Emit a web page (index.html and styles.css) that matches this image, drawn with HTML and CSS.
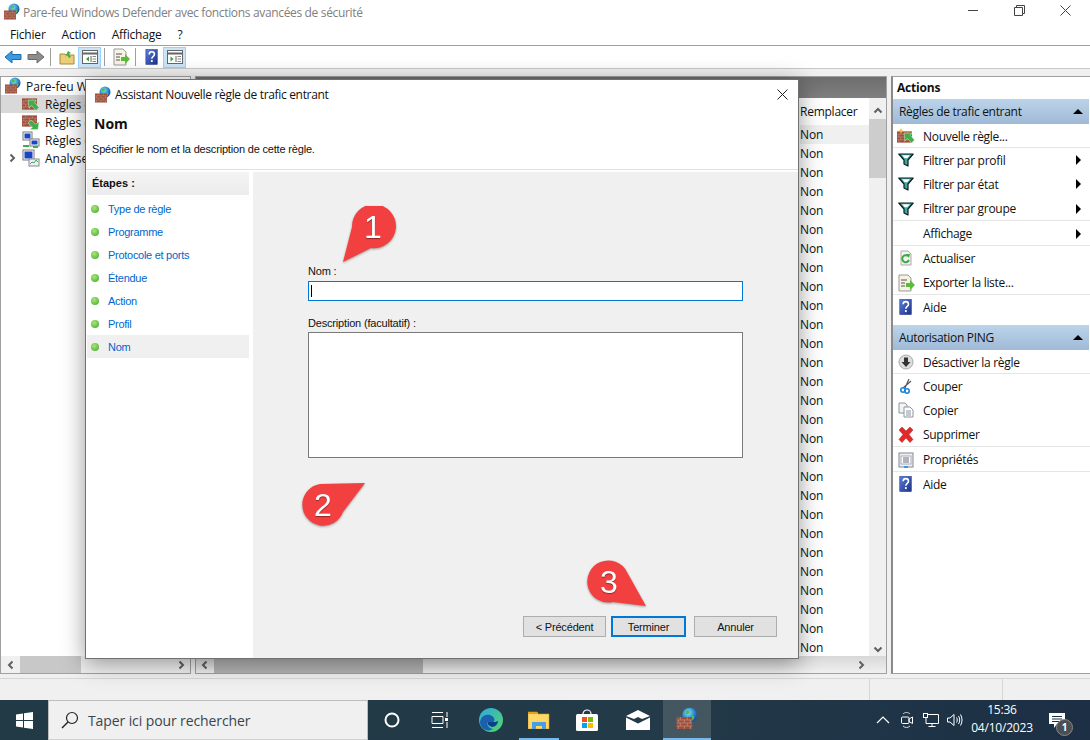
FILE: index.html
```html
<!DOCTYPE html>
<html lang="fr">
<head>
  <meta charset="UTF-8">
  <title>Pare-feu Windows Defender</title>
  <link rel="stylesheet" href="styles.css">
</head>
<body>
  <svg class="defs" width="0" height="0">
    <defs>
      <radialGradient id="globe" cx="40%" cy="35%" r="70%">
        <stop offset="0" stop-color="#8fe0f0"/><stop offset=".55" stop-color="#2f8fd0"/><stop offset="1" stop-color="#173f9a"/>
      </radialGradient>
      <linearGradient id="helpblue" x1="0" y1="0" x2="1" y2="1">
        <stop offset="0" stop-color="#5a7fd8"/><stop offset="1" stop-color="#1c2f8a"/>
      </linearGradient>
      <linearGradient id="edge1" x1="0" y1="0" x2="1" y2="1">
        <stop offset="0" stop-color="#2fa8e0"/><stop offset="1" stop-color="#52d86a"/>
      </linearGradient>
      <symbol id="bricks" viewBox="0 0 16 12">
        <rect width="16" height="12" fill="#9c4f3c"/>
        <path d="M0 3h16M0 6h16M0 9h16M4 0v3M11 0v3M2 3v3M8 3v3M14 3v3M4 6v3M11 6v3M2 9v3M8 9v3M14 9v3" stroke="#c99a88" stroke-width=".6"/>
      </symbol>
      <symbol id="fw" viewBox="0 0 18 18">
        <circle cx="11" cy="6" r="5.5" fill="url(#globe)"/>
        <path d="M8 3c2-1 3 0 3 1s-2 2-3 1zM12 7c2-1 3 0 2 2s-3 1-2-2z" fill="#4cc04c"/>
        <use href="#bricks" x="1" y="7" width="12" height="10"/>
      </symbol>
      <symbol id="rule-in" viewBox="0 0 18 16">
        <use href="#bricks" x="0" y="2" width="15" height="12"/>
        <path d="M6 4l8 0-1.500 2.500 4.500 5-3 3-4.500-5L7 12z" fill="#3eae4a" stroke="#dff0d8" stroke-width=".5"/>
      </symbol>
      <symbol id="rule-new" viewBox="0 0 18 16">
        <use href="#bricks" x="0" y="3" width="15" height="12"/>
        <path d="M7 5l8 0-1.500 2.500 4 4.500-3 3-4-4.500L8 13z" fill="#3eae4a" stroke="#dff0d8" stroke-width=".5"/>
        <path d="M4 0l.8 2.200L7 3l-2.200.8L4 6l-.8-2.200L1 3l2.200-.8z" fill="#f5b428"/>
      </symbol>
      <symbol id="rule-out" viewBox="0 0 18 16">
        <use href="#bricks" x="0" y="1" width="15" height="12"/>
        <path d="M17 8l-1 7.500-8 0 2.500-2.500-4.500-4 3-3 4.500 4z" fill="#3eae4a" stroke="#dff0d8" stroke-width=".5"/>
      </symbol>
      <symbol id="pcs" viewBox="0 0 18 18">
        <rect x="1" y="1" width="9" height="8" fill="#fff" stroke="#777"/><rect x="2.5" y="2.5" width="6" height="5" fill="#1b46c2"/>
        <rect x="8" y="8" width="9" height="7" fill="#fff" stroke="#777"/><rect x="9.5" y="9.5" width="6" height="4" fill="#1b46c2"/>
        <path d="M1 15h6M11 16h5" stroke="#3eae4a" stroke-width="2"/>
      </symbol>
      <symbol id="monitor" viewBox="0 0 18 18">
        <rect x="1" y="1" width="11" height="10" fill="#fff" stroke="#777"/><rect x="2.5" y="2.5" width="8" height="7" fill="#1b46c2"/>
        <rect x="7" y="10" width="10" height="7" fill="#eef" stroke="#888"/><path d="M8 15l2-2 2 1 2-3 2 2" fill="none" stroke="#3eae4a"/>
      </symbol>
      <symbol id="help" viewBox="0 0 16 18">
        <rect x="1" y="0.5" width="13" height="17" fill="url(#helpblue)" stroke="#1c2f8a" stroke-width=".6"/>
        <path d="M4.8 6c0-4 6-4 6 0 0 2.400-3 2.400-3 5" fill="none" stroke="#fff" stroke-width="1.800"/>
        <rect x="6.800" y="12.500" width="2" height="2.200" fill="#fff"/>
      </symbol>
      <symbol id="funnel" viewBox="0 0 16 14">
        <path d="M.8 1h14.400l-5.200 6v6l-4-2V7z" fill="#3fa89c" stroke="#0c1c20" stroke-width="1.200" stroke-linejoin="round"/>
        <path d="M4 2.200h8l-2.800 3h-2.400z" fill="#fff"/>
      </symbol>
      <symbol id="export" viewBox="0 0 18 18">
        <path d="M2 1h9l3 3v13H2z" fill="#f7f3e3" stroke="#999"/>
        <path d="M4 6h6M4 9h4M4 12h4" stroke="#555"/>
        <path d="M9 9h4V6l5 5-5 5v-3H9z" fill="#5cbb3a"/>
      </symbol>
      <symbol id="chev-l" viewBox="0 0 10 10"><path d="M6.500 1.500L3 5l3.500 3.500" fill="none" stroke="#606060" stroke-width="2"/></symbol>
      <symbol id="chev-r" viewBox="0 0 10 10"><path d="M3.500 1.500L7 5 3.500 8.500" fill="none" stroke="#606060" stroke-width="2"/></symbol>
      <symbol id="chev-u" viewBox="0 0 10 10"><path d="M1.500 6.500L5 3l3.500 3.500" fill="none" stroke="#606060" stroke-width="2"/></symbol>
      <symbol id="chev-d" viewBox="0 0 10 10"><path d="M1.500 3.500L5 7l3.500-3.500" fill="none" stroke="#606060" stroke-width="2"/></symbol>
    </defs>
  </svg>

  <div class="window">
    <div class="titlebar">
      <svg class="ic18"><use href="#fw"/></svg>
      <span class="title-text">Pare-feu Windows Defender avec fonctions avancées de sécurité</span>
      <div class="win-ctrls">
        <svg width="11" height="11" viewBox="0 0 11 11"><path d="M0 5.500h10" stroke="#444"/></svg>
        <svg width="11" height="11" viewBox="0 0 11 11"><path d="M.5 2.500h8v8h-8zM2.500 2.500v-2h8v8h-2" fill="none" stroke="#444"/></svg>
        <svg width="11" height="11" viewBox="0 0 11 11"><path d="M.5.500l10 10M10.500.500l-10 10" stroke="#444"/></svg>
      </div>
    </div>

    <div class="menubar">
      <span>Fichier</span><span>Action</span><span>Affichage</span><span>?</span>
    </div>

    <div class="toolbar">
      <span class="tool"><svg width="18" height="14" viewBox="0 0 18 14"><path d="M1 7l7-6v3.500h9v5H8V13z" fill="#3a9be0" stroke="#1c6cb0"/></svg></span>
      <span class="tool"><svg width="18" height="14" viewBox="0 0 18 14"><path d="M17 7l-7-6v3.500H1v5h9V13z" fill="#8d8d8d" stroke="#6a6a6a"/></svg></span>
      <i class="tool-sep"></i>
      <span class="tool"><svg width="16" height="16" viewBox="0 0 16 16"><path d="M1 5h5l1 1h8v9H1z" fill="#e9cf7a" stroke="#a98a30"/><path d="M6 8l3-6 3 2-2 1 2 3-2 1-2-3z" fill="#4cab3c"/></svg></span>
      <span class="tool tool-on"><svg width="16" height="14" viewBox="0 0 16 14"><rect x=".5" y=".5" width="15" height="13" fill="#fff" stroke="#666"/><path d="M.5 3.500h15" stroke="#666" stroke-width="2"/><path d="M9 6v6" stroke="#666"/><path d="M7 6.500L4 9l3 2.500z" fill="#3a9c3a"/><path d="M10.500 6.500h3.500M10.500 9h3.500M10.500 11.500h3.500" stroke="#888"/></svg></span>
      <i class="tool-sep"></i>
      <span class="tool"><svg class="ic18"><use href="#export"/></svg></span>
      <i class="tool-sep"></i>
      <span class="tool"><svg width="14" height="18"><use href="#help"/></svg></span>
      <span class="tool tool-on"><svg width="16" height="14" viewBox="0 0 16 14"><rect x=".5" y=".5" width="15" height="13" fill="#fff" stroke="#666"/><path d="M.5 3.500h15" stroke="#666" stroke-width="2"/><path d="M9 6v6" stroke="#666"/><path d="M3.500 6.500L6.500 9l-3 2.500z" fill="#3a9c3a"/><path d="M10.500 6.500h3.500M10.500 9h3.500M10.500 11.500h3.500" stroke="#888"/></svg></span>
    </div>

    <div class="panes">
      <section class="pane tree-pane">
        <div class="tree">
          <div class="tree-row tree-root"><svg class="ic18"><use href="#fw"/></svg>Pare-feu Windows Defender</div>
          <div class="tree-row tree-sel"><svg class="ic18"><use href="#rule-in"/></svg>Règles de trafic entrant</div>
          <div class="tree-row"><svg class="ic18"><use href="#rule-out"/></svg>Règles de trafic sortant</div>
          <div class="tree-row"><svg class="ic18"><use href="#pcs"/></svg>Règles de sécurité de connexion</div>
          <div class="tree-row tree-more"><svg class="more" width="10" height="10"><use href="#chev-r"/></svg><svg class="ic18"><use href="#monitor"/></svg>Analyse</div>
        </div>
        <div class="hbar">
          <svg width="10" height="10"><use href="#chev-l"/></svg>
          <div class="hbar-track"><div class="hbar-thumb hbar-thumb-left"></div></div>
          <svg width="10" height="10"><use href="#chev-r"/></svg>
        </div>
      </section>

      <section class="pane list-pane">
        <div class="pane-head"></div>
        <div class="list-main">
          <div class="list-col">
            <div class="col-head">Remplacer</div>
            <div class="cell cell-sel">Non</div>
            <div class="cell">Non</div><div class="cell">Non</div><div class="cell">Non</div>
            <div class="cell">Non</div><div class="cell">Non</div><div class="cell">Non</div>
            <div class="cell">Non</div><div class="cell">Non</div><div class="cell">Non</div>
            <div class="cell">Non</div><div class="cell">Non</div><div class="cell">Non</div>
            <div class="cell">Non</div><div class="cell">Non</div><div class="cell">Non</div>
            <div class="cell">Non</div><div class="cell">Non</div><div class="cell">Non</div>
            <div class="cell">Non</div><div class="cell">Non</div><div class="cell">Non</div>
            <div class="cell">Non</div><div class="cell">Non</div><div class="cell">Non</div>
            <div class="cell">Non</div><div class="cell">Non</div><div class="cell">Non</div>
          </div>
          <div class="vbar">
            <svg width="10" height="10"><use href="#chev-u"/></svg>
            <div class="vbar-track"><div class="vbar-thumb"></div></div>
            <svg width="10" height="10"><use href="#chev-d"/></svg>
          </div>
        </div>
        <div class="hbar hbar-main">
          <svg width="10" height="10"><use href="#chev-l"/></svg>
          <div class="hbar-track"><div class="hbar-thumb hbar-thumb-main"></div></div>
          <svg width="10" height="10"><use href="#chev-r"/></svg>
        </div>
      </section>

      <section class="pane actions-pane">
        <div class="actions-head">Actions</div>
        <div class="act-section">Règles de trafic entrant<i class="tri-up"></i></div>
        <div class="act act-line act-tight"><svg class="ic18"><use href="#rule-new"/></svg>Nouvelle règle...</div>
        <div class="act"><svg class="ic16"><use href="#funnel"/></svg>Filtrer par profil<i class="tri-right"></i></div>
        <div class="act"><svg class="ic16"><use href="#funnel"/></svg>Filtrer par état<i class="tri-right"></i></div>
        <div class="act act-line"><svg class="ic16"><use href="#funnel"/></svg>Filtrer par groupe<i class="tri-right"></i></div>
        <div class="act act-line"><span class="ic-blank"></span>Affichage<i class="tri-right"></i></div>
        <div class="act"><svg class="ic16" viewBox="0 0 16 16"><path d="M3 1h7l3 3v11H3z" fill="#f4f4f4" stroke="#aaa"/><path d="M11 10a3.500 3.500 0 1 1-1-4" fill="none" stroke="#3cab3c" stroke-width="2"/><path d="M8 4l4 0-1 4z" fill="#3cab3c"/></svg>Actualiser</div>
        <div class="act act-line"><svg class="ic18"><use href="#export"/></svg>Exporter la liste...</div>
        <div class="act"><svg class="ic16"><use href="#help"/></svg>Aide</div>

        <div class="act-section act-section-2">Autorisation PING<i class="tri-up"></i></div>
        <div class="act act-line act-tight"><svg class="ic16" viewBox="0 0 16 16"><circle cx="8" cy="8" r="7" fill="#ddd" stroke="#aaa"/><path d="M6 3.500h4V8h2.500L8 13 3.500 8H6z" fill="#333"/></svg>Désactiver la règle</div>
        <div class="act"><svg class="ic16" viewBox="0 0 16 16"><path d="M11 1L7 10M13 3L5 10" stroke="#556" stroke-width="1.200"/><circle cx="5" cy="12" r="2.200" fill="none" stroke="#1b86d8" stroke-width="1.600"/><circle cx="9" cy="13" r="2.200" fill="none" stroke="#1b86d8" stroke-width="1.600"/></svg>Couper</div>
        <div class="act"><svg class="ic16" viewBox="0 0 16 16"><path d="M1 1h6l2 2v8H1z" fill="#f4f4f4" stroke="#8a94a0"/><path d="M6 5h6l3 3v7H6z" fill="#fff" stroke="#8a94a0"/><path d="M8 9h5M8 11h5M8 13h5" stroke="#8a94a0"/></svg>Copier</div>
        <div class="act act-line"><svg class="ic18" viewBox="0 0 18 18"><path d="M2 4l3-3 4 4 4-4 3 3-4 4.500 4 5-3 3-4-4.500-4 4.500-3-3 4-5z" fill="#e02a2a" stroke="#b51f1f" stroke-width=".5"/></svg>Supprimer</div>
        <div class="act act-line"><svg class="ic16" viewBox="0 0 16 16"><rect x="1" y="1" width="14" height="14" fill="#eef0f2" stroke="#7f8890"/><rect x="3" y="4" width="10" height="8" fill="#fff" stroke="#aab"/><path d="M5 6h6M5 8h6M5 10h6" stroke="#667"/><path d="M6 15h4" stroke="#2aa0e0" stroke-width="2"/></svg>Propriétés</div>
        <div class="act"><svg class="ic16"><use href="#help"/></svg>Aide</div>
      </section>
    </div>

    <div class="statusbar">
      <span class="status-main"></span><span class="status-mid"></span><span class="status-end"></span>
    </div>
  </div>

  <div class="taskbar">
    <div class="start">
      <svg width="17" height="17" viewBox="0 0 17 17"><path d="M0 2.500l7-1v6.500H0zM8 1.300l9-1.300v8H8zM0 9h7v6.500l-7-1zM8 9h9v8l-9-1.300z" fill="#fff"/></svg>
    </div>
    <div class="search">
      <svg width="18" height="18" viewBox="0 0 18 18"><circle cx="11" cy="7" r="5.500" fill="none" stroke="#222" stroke-width="1.200"/><path d="M7 11l-6 6" stroke="#222" stroke-width="1.400"/></svg>
      <span>Taper ici pour rechercher</span>
    </div>
    <div class="task-icons">
      <div class="task"><svg width="18" height="18" viewBox="0 0 18 18"><circle cx="9" cy="9" r="6.500" fill="none" stroke="#fff" stroke-width="2"/></svg></div>
      <div class="task"><svg width="18" height="16" viewBox="0 0 18 16"><path d="M1 .500h11M1 15.500h11M1 4.500h11v7H1zM16 0v5M16 10v6" fill="none" stroke="#fff"/><rect x="14" y="6" width="3" height="3" fill="#fff"/></svg></div>
      <div class="task task-edge"><svg width="24" height="24" viewBox="0 0 24 24"><circle cx="12" cy="12" r="12" fill="url(#edge1)"/><path d="M1 14c1-7 8-9 12-6 3 2 3 5 1 6-2 0-3-1-5 0s0 6 5 7c-6 4-13-1-13-7z" fill="#1a5fb0"/><path d="M9 14c2-1 4 0 5 0s3 0 5-1c0 3-3 6-6 6-3-1-5-3-4-5z" fill="#0e3f8a"/></svg></div>
      <div class="task task-open"><svg width="22" height="18" viewBox="0 0 22 18"><path d="M0 1h9l1 2h11v15H0z" fill="#ffd766" stroke="#c9a030" stroke-width=".6"/><path d="M0 1h9l1 2H0z" fill="#e0a418"/><path d="M4 11h14v7h-4v-3H8v3H4z" fill="#4a9de0"/></svg></div>
      <div class="task"><svg width="24" height="24" viewBox="0 0 24 24"><path d="M8 6a4 4 0 0 1 8 0" fill="none" stroke="#fff" stroke-width="1.200"/><rect x="1" y="6" width="22" height="17" rx="1.500" fill="#fff"/><rect x="7" y="9" width="5" height="5" fill="#f25022"/><rect x="13" y="9" width="5" height="5" fill="#7fba00"/><rect x="7" y="15" width="5" height="5" fill="#00a4ef"/><rect x="13" y="15" width="5" height="5" fill="#ffb900"/></svg></div>
      <div class="task task-mail"><svg width="24" height="20" viewBox="0 0 24 20"><path d="M0 6l12-6 12 6-8 3-4-2-4 2z" fill="#fff"/><path d="M0 7.500l12 6 12-6V20H0z" fill="#fff"/></svg></div>
      <div class="task task-active"><svg width="24" height="24"><use href="#fw"/></svg></div>
    </div>
    <div class="tray">
      <svg class="tray-chev" width="14" height="8" viewBox="0 0 14 8"><path d="M1 7l6-6 6 6" fill="none" stroke="#fff" stroke-width="1.200"/></svg>
      <svg class="tray-meet" width="12" height="18" viewBox="0 0 12 18"><path d="M2 3c2-2 5-2 7 0M2 15c2 2 5 2 7 0" fill="none" stroke="#ddd"/><rect x=".5" y="6" width="7.500" height="6.500" rx="1" fill="none" stroke="#fff"/><path d="M8 8l3.500-2v6.500L8 10.500z" fill="none" stroke="#fff"/></svg>
      <svg class="tray-net" width="16" height="14" viewBox="0 0 16 14"><path d="M3 1.500h12.500v9H3zM9 10.500v3M5.500 13.500h7" fill="none" stroke="#fff"/><rect x=".5" y=".5" width="4" height="4" fill="#1d3042" stroke="#fff"/></svg>
      <svg width="16" height="14" viewBox="0 0 16 14"><path d="M.5 5h2.500L7 1.500v11L3 9H.5zM9.500 4.500c1 1.500 1 3.500 0 5M11.500 3c1.600 2.500 1.600 5.500 0 8M13.500 1.500c2 3 2 8 0 11" fill="none" stroke="#fff"/></svg>
      <div class="clock"><div>15:36</div><div>04/10/2023</div></div>
      <div class="notif">
        <svg width="16" height="15" viewBox="0 0 16 15"><path d="M0 0h16v11H8l-3 4v-4H0z" fill="#fff"/><path d="M3 3.500h10M3 6h10M3 8.500h7" stroke="#1d3042"/></svg>
        <span class="notif-badge">1</span>
      </div>
    </div>
  </div>

  <div class="dialog">
    <div class="dlg-title">
      <svg class="ic18"><use href="#fw"/></svg>
      <span>Assistant Nouvelle règle de trafic entrant</span>
      <svg class="dlg-close" width="11" height="11" viewBox="0 0 11 11"><path d="M.5.500l10 10M10.500.500l-10 10" stroke="#222"/></svg>
    </div>
    <div class="dlg-head">
      <h1>Nom</h1>
      <p>Spécifier le nom et la description de cette règle.</p>
    </div>
    <div class="dlg-body">
      <aside class="steps">
        <div class="steps-head">Étapes :</div>
        <div class="step"><i class="dot"></i>Type de règle</div>
        <div class="step"><i class="dot"></i>Programme</div>
        <div class="step"><i class="dot"></i>Protocole et ports</div>
        <div class="step"><i class="dot"></i>Étendue</div>
        <div class="step"><i class="dot"></i>Action</div>
        <div class="step"><i class="dot"></i>Profil</div>
        <div class="step step-on"><i class="dot"></i>Nom</div>
      </aside>
      <div class="dlg-main">
        <label class="fld-label">Nom :</label>
        <div class="fld-input"><i class="caret"></i></div>
        <label class="fld-label fld-label-2">Description (facultatif) :</label>
        <div class="fld-area"></div>
        <div class="dlg-btns">
          <button>&lt; Précédent</button>
          <button class="btn-default">Terminer</button>
          <button>Annuler</button>
        </div>
      </div>
    </div>
  </div>

  <div class="pin pin-1">
    <svg width="56" height="60" viewBox="0 0 56 60"><path d="M1 56L10 21A22 22 0 1 1 29 42Z" fill="#f24040"/></svg>
    <span>1</span>
  </div>
  <div class="pin pin-2">
    <svg width="66" height="48" viewBox="0 0 66 48"><path d="M63 2L41 31A21 21 0 1 1 18 3Z" fill="#f24040"/></svg>
    <span>2</span>
  </div>
  <div class="pin pin-3">
    <svg width="64" height="50" viewBox="0 0 64 50"><path d="M60 48L27 44A21 21 0 1 1 41 14Z" fill="#f24040"/></svg>
    <span>3</span>
  </div>
</body>
</html>
```

FILE: styles.css
```css
* {
  box-sizing: border-box;
}

html, body {
  margin: 0;
  height: 740px;
  overflow: hidden;
}

body {
  font-family: "Open Sans", "Noto Sans", sans-serif;
  font-size: 12px;
  color: #111;
  background: #f0f0f0;
  display: flex;
  flex-direction: column;
}

.defs {
  position: absolute;
}

.ic18 {
  width: 18px;
  height: 18px;
  flex: none;
}

.ic16 {
  width: 16px;
  height: 16px;
  flex: none;
}

.window {
  height: 700px;
  display: flex;
  flex-direction: column;
}

.titlebar {
  height: 24px;
  background: #fff;
  display: flex;
  align-items: center;
  padding-left: 3px;
  gap: 2px;
}

.title-text {
  color: #808080;
  letter-spacing: -0.34px;
}

.win-ctrls {
  margin-left: auto;
  display: flex;
  gap: 35px;
  padding-right: 19px;
  margin-top: -4px;
}

.menubar {
  height: 22px;
  background: #fff;
  border-bottom: 1px solid #a0a0a0;
  display: flex;
  align-items: center;
  padding-left: 10px;
  gap: 16px;
  letter-spacing: -0.2px;
}

.toolbar {
  height: 23px;
  background: #fff;
  border-bottom: 1px solid #c8c8c8;
  display: flex;
  align-items: center;
  padding-left: 1px;
}

.tool {
  width: 23px;
  height: 21px;
  display: flex;
  align-items: center;
  justify-content: center;
  border: 1px solid transparent;
}

.tool-on {
  background: #cce4f7;
  border-color: #99d1ff;
}

.tool-sep {
  width: 1px;
  height: 18px;
  background: #a0a0a0;
  margin: 0 4px 0 3px;
}

.panes {
  flex: 1;
  display: flex;
  gap: 4px;
  padding: 7px 0 4px;
  min-height: 0;
}

.pane {
  background: #fff;
  border: 1px solid #a0a0a0;
  display: flex;
  flex-direction: column;
  min-height: 0;
}

.tree-pane {
  width: 191px;
}

.tree {
  flex: 1;
}

.tree-row {
  height: 18px;
  display: flex;
  align-items: center;
  gap: 5px;
  padding-left: 21px;
  white-space: nowrap;
  overflow: hidden;
}

.tree-root {
  padding-left: 3px;
  gap: 4px;
}

.tree-sel {
  background: #d9d9d9;
}

.tree-more {
  padding-left: 6px;
}

.tree-more .more {
  flex: none;
}

.hbar {
  height: 17px;
  background: #f0f0f0;
  display: flex;
  align-items: center;
  gap: 4px;
  padding: 0 4px 0 5px;
  flex: none;
}

.hbar-track {
  flex: 1;
  height: 100%;
}

.hbar-thumb {
  height: 100%;
  background: #c8c8c8;
}

.hbar-thumb-left {
  width: 61px;
}

.list-pane {
  flex: 1;
}

.pane-head {
  height: 21px;
  background: linear-gradient(#6d6d6d, #7f7f7f);
  flex: none;
}

.list-main {
  flex: 1;
  display: flex;
  justify-content: flex-end;
  min-height: 0;
}

.list-col {
  width: 71px;
  padding-left: 2px;
  overflow: hidden;
}

.col-head {
  height: 27px;
  padding-top: 5px;
  line-height: 18px;
  letter-spacing: -0.25px;
}

.cell {
  height: 19px;
  line-height: 19px;
  letter-spacing: -0.1px;
}

.cell-sel {
  background: #f0f0f0;
}

.vbar {
  width: 17px;
  background: #f0f0f0;
  display: flex;
  flex-direction: column;
  align-items: center;
  padding: 8px 0 2px;
}

.vbar-track {
  flex: 1;
  width: 100%;
  padding-top: 3px;
}

.vbar-thumb {
  width: 100%;
  height: 59px;
  background: #cdcdcd;
}

.hbar-main {
  padding-right: 20px;
  padding-left: 4px;
  background: linear-gradient(#d8d8d8, #f0f0f0);
}

.hbar-thumb-main {
  width: 209px;
  background: #b4b4b4;
}

.actions-pane {
  width: 199px;
  border-left: 2px solid #8a8a8a;
  border-right: none;
}

.actions-head {
  height: 22px;
  font-weight: 700;
  line-height: 21px;
  padding-left: 4px;
  letter-spacing: -0.2px;
}

.act-section {
  height: 25px;
  background: linear-gradient(#bcd4ea, #9fbad6);
  display: flex;
  align-items: center;
  padding-left: 6px;
  letter-spacing: -0.3px;
  margin-right: 1px;
}

.act-section-2 {
  margin-top: 6px;
}

.tri-up {
  margin-left: auto;
  margin-right: 6px;
  border: 5px solid transparent;
  border-top: none;
  border-bottom: 5px solid #000;
}

.act {
  height: 24px;
  display: flex;
  align-items: center;
  padding-left: 4px;
  padding-right: 9px;
  letter-spacing: -0.3px;
  flex: none;
}

.act > svg, .ic-blank {
  margin-right: 8px;
  width: 18px;
  height: 18px;
  flex: none;
}

.act > .ic16 {
  width: 16px;
  height: 16px;
  margin-left: 1px;
  margin-right: 9px;
}

.act-line {
  height: 25px;
  background: linear-gradient(#e6e6e6, #e6e6e6) no-repeat 0 100% / 100% 1px;
}

.act-tight {
  height: 24px;
}

.tri-right {
  margin-left: auto;
  border: 5px solid transparent;
  border-right: none;
  border-left: 5px solid #000;
}

.statusbar {
  height: 22px;
  display: flex;
  background: #f0f0f0;
  border-top: 1px solid #d6d6d6;
}

.status-main {
  width: 870px;
  border-right: 1px solid #d6d6d6;
}

.status-mid {
  width: 133px;
  border-right: 1px solid #d6d6d6;
}

.taskbar {
  height: 40px;
  background: linear-gradient(90deg, #213a45, #233a48 60%, #1c2f45);
  display: flex;
  color: #fff;
}

.start {
  width: 48px;
  display: flex;
  align-items: center;
  justify-content: center;
}

.search {
  width: 320px;
  background: #f0f0f0;
  border: 1px solid #bdbdbd;
  border-bottom-color: #d0d0d0;
  display: flex;
  align-items: center;
  gap: 9px;
  padding-left: 12px;
  color: #39454e;
  font-size: 14px;
  letter-spacing: -0.1px;
}

.task-icons {
  display: flex;
}

.task {
  width: 48px;
  display: flex;
  align-items: center;
  justify-content: center;
}

.task-edge {
  margin-left: 3px;
}

.task-mail {
  margin-left: 3px;
}

.task-open {
  background: linear-gradient(#76b9ed, #76b9ed) no-repeat 50% 100% / 40px 2px;
}

.task-active {
  margin-left: 1px;
  background: #445660;
  border-bottom: 2px solid #76b9ed;
}

.tray {
  margin-left: auto;
  display: flex;
  align-items: center;
}

.tray-chev {
  margin-right: 11px;
}

.tray-meet {
  margin-right: 10px;
}

.tray-net {
  margin-right: 8px;
}

.clock {
  width: 80px;
  margin: -2px 0 0 -1px;
  text-align: center;
  font-size: 12px;
  line-height: 18px;
  letter-spacing: -0.2px;
}

.notif {
  position: relative;
  width: 48px;
  height: 40px;
  display: flex;
  align-items: center;
  justify-content: center;
  padding-right: 18px;
}

.notif-badge {
  position: absolute;
  left: 14px;
  top: 19px;
  width: 17px;
  height: 17px;
  border-radius: 50%;
  background: #4a4f55;
  border: 1px solid #888;
  font-size: 10px;
  line-height: 15px;
  text-align: center;
  font-weight: 700;
}

.dialog {
  position: absolute;
  left: 85px;
  top: 79px;
  width: 714px;
  height: 580px;
  background: #fff;
  border: 1px solid #707070;
  box-shadow: 0 4px 22px rgba(0, 0, 0, 0.4);
  display: flex;
  flex-direction: column;
}

.dlg-title {
  height: 27px;
  display: flex;
  align-items: center;
  gap: 3px;
  padding: 0 10px 0 8px;
  letter-spacing: -0.33px;
  margin-top: 1px;
}

.dlg-close {
  margin-left: auto;
}

.dlg-head {
  height: 62px;
  border-bottom: 1px solid #e0e0e0;
}

.dlg-head h1 {
  margin: 7px 0 0 8px;
  font-family: "Open Sans", sans-serif;
  font-size: 14px;
  line-height: 18px;
}

.dlg-head p {
  margin: 9px 0 0 6px;
  font-family: "Liberation Sans", Arial, sans-serif;
  font-size: 11px;
  line-height: 14px;
  letter-spacing: -0.18px;
}

.dlg-body {
  flex: 1;
  display: flex;
  padding-top: 2px;
  min-height: 0;
  font-family: "Liberation Sans", Arial, sans-serif;
  font-size: 11px;
  letter-spacing: -0.18px;
}

.steps {
  width: 167px;
  padding: 0 4px 0 1px;
  flex: none;
}

.steps-head {
  height: 23px;
  line-height: 23px;
  padding-left: 5px;
  font-weight: 700;
  letter-spacing: 0;
  background: linear-gradient(#f4f4f4, #ececec);
  margin-bottom: 2px;
}

.step {
  height: 23px;
  display: flex;
  align-items: center;
  color: #0066cc;
  padding-left: 4px;
  letter-spacing: -0.28px;
}

.step-on {
  background: #f0f0f0;
}

.dot {
  width: 8px;
  height: 8px;
  border-radius: 50%;
  background: radial-gradient(circle at 40% 35%, #a8e878, #3fa52c);
  margin-right: 9px;
}

.dlg-main {
  flex: 1;
  background: #f0f0f0;
  padding: 92px 55px 0 55px;
  display: flex;
  flex-direction: column;
}

.fld-label {
  display: block;
  height: 14px;
  line-height: 14px;
}

.fld-input {
  height: 20px;
  margin-top: 3px;
  background: #fff;
  border: 1px solid #0078d7;
  padding: 3px 2px;
}

.caret {
  display: block;
  width: 1px;
  height: 12px;
  background: #000;
}

.fld-label-2 {
  margin-top: 15px;
}

.fld-area {
  height: 126px;
  margin-top: 2px;
  background: #fff;
  border: 1px solid #7a7a7a;
}

.dlg-btns {
  margin-top: 158px;
  display: flex;
  justify-content: flex-end;
  gap: 6px;
  margin-right: -34px;
}

.dlg-btns button {
  width: 83px;
  height: 21px;
  padding: 0;
  background: #e1e1e1;
  border: 1px solid #adadad;
  color: #111;
  font: inherit;
  letter-spacing: inherit;
}

.dlg-btns .btn-default {
  width: 75px;
  border: 2px solid #0078d7;
  margin: 0 2px 0 -1px;
}

.pin {
  position: absolute;
  filter: drop-shadow(0 1px 1px rgba(0, 0, 0, 0.35));
}

.pin svg {
  display: block;
}

.pin span {
  position: absolute;
  color: #fff;
  font-family: "Liberation Sans", Arial, sans-serif;
  font-size: 32px;
  line-height: 36px;
  text-align: center;
  text-shadow: 0 1px 1px rgba(0, 0, 0, 0.4);
}

.pin-1 {
  left: 342px;
  top: 206px;
}

.pin-1 span {
  left: 19px;
  top: 3px;
  width: 24px;
}

.pin-2 {
  left: 302px;
  top: 481px;
}

.pin-2 span {
  left: 9px;
  top: 6px;
  width: 24px;
}

.pin-3 {
  left: 586px;
  top: 558px;
}

.pin-3 span {
  left: 11px;
  top: 6px;
  width: 24px;
}
```
